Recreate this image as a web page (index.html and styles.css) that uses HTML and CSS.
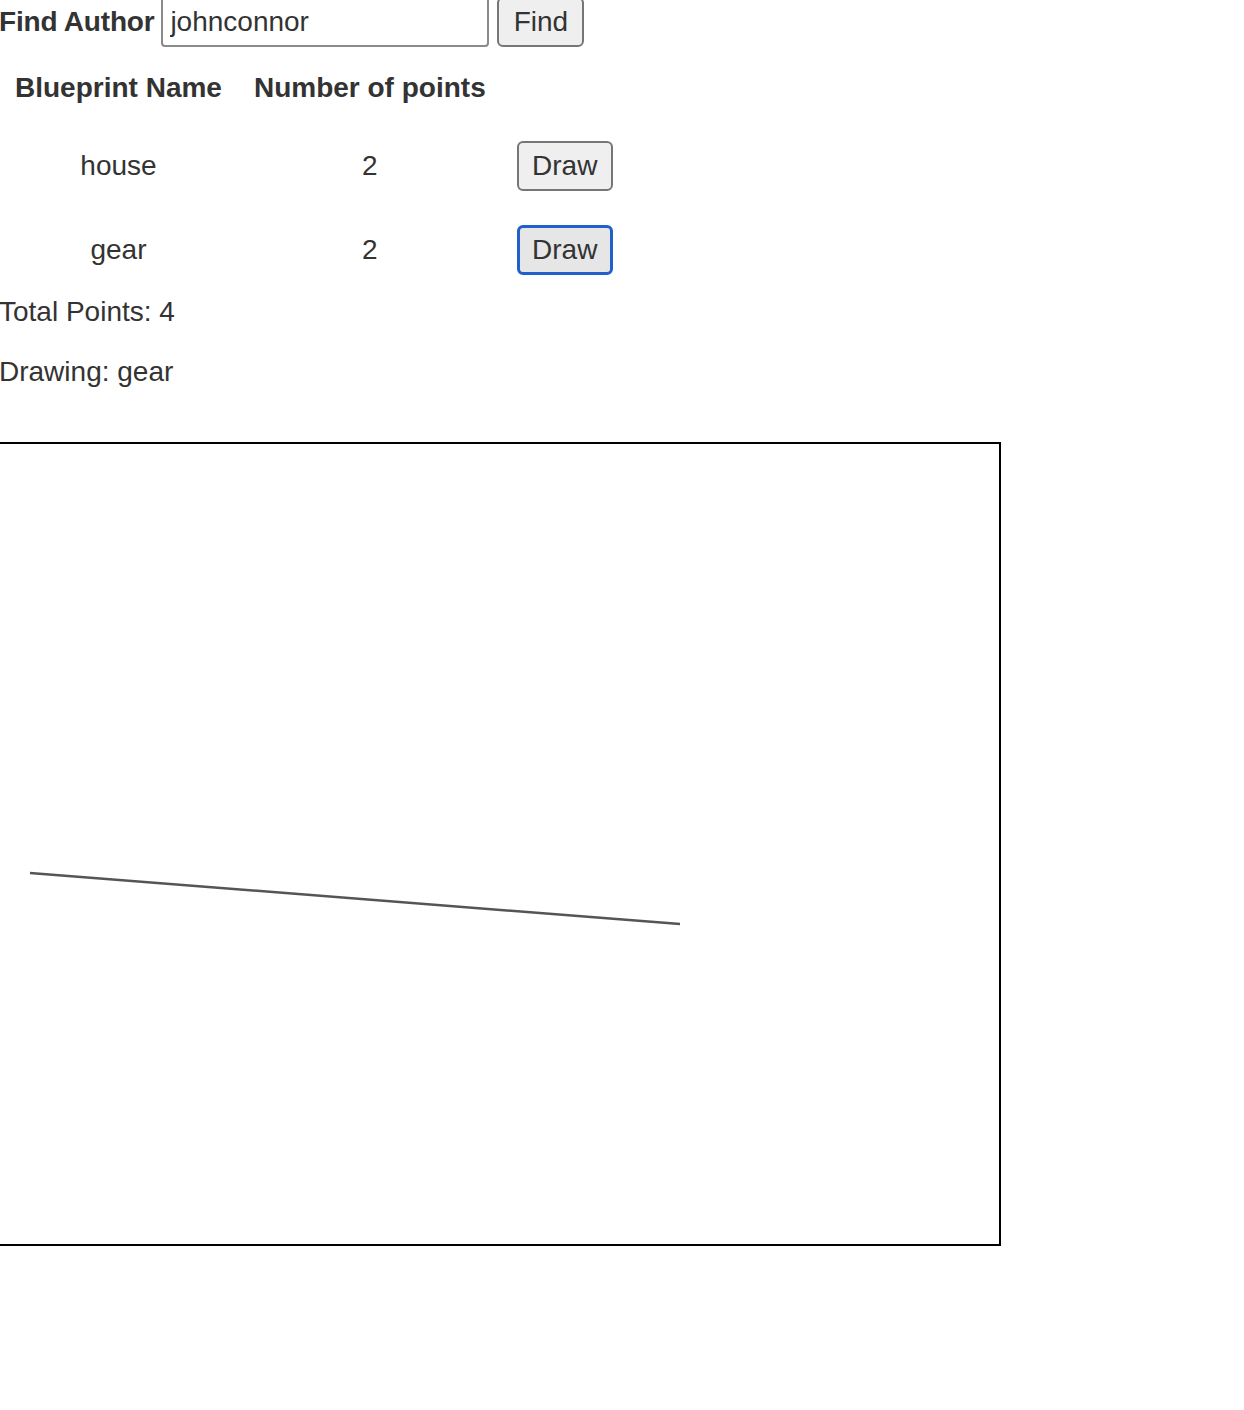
FILE: index.html
```html
<!DOCTYPE html>
<html>
<head>
<meta charset="utf-8">
<title>Blueprints</title>
<link rel="stylesheet" href="styles.css">
</head>
<body>
<div class="page">
  <div class="search">
    <label class="search-label" for="author">Find Author</label>
    <input class="search-input" id="author" type="text" value="johnconnor">
    <button class="btn btn-find" type="button">Find</button>
  </div>
  <table class="bp-table">
    <thead>
      <tr><th>Blueprint Name</th><th>Number of points</th><th></th></tr>
    </thead>
    <tbody>
      <tr><td>house</td><td>2</td><td><button class="btn btn-draw" type="button">Draw</button></td></tr>
      <tr><td>gear</td><td>2</td><td><button class="btn btn-draw btn-focus" type="button">Draw</button></td></tr>
    </tbody>
  </table>
  <p class="info">Total Points: 4</p>
  <p class="info info-last">Drawing: gear</p>
  <div class="canvas">
    <svg class="canvas-svg" width="1000" height="800" viewBox="0 0 1000 800">
      <line x1="31" y1="429" x2="681" y2="480" stroke="#555" stroke-width="2.5"/>
    </svg>
  </div>
</div>
</body>
</html>
```
FILE: styles.css
```css
html, body {
  margin: 0;
  padding: 0;
  background: #fff;
}
body {
  font-family: "Liberation Sans", Arial, Helvetica, sans-serif;
  font-size: 28px;
  line-height: 40px;
  color: #333;
}
.page {
  margin: -3px 0 0 -1px;
}
.search {
  display: flex;
  align-items: center;
  height: 50px;
}
.search-label {
  font-weight: bold;
  line-height: 40px;
  margin-right: 7px;
  letter-spacing: -0.2px;
}
.search-input {
  box-sizing: border-box;
  width: 328px;
  height: 50px;
  border: 2px solid #8a8a8a;
  border-radius: 4px;
  padding: 0 7px;
  font-family: inherit;
  font-size: 28px;
  color: #333;
  background: #fff;
  margin: 0 8px 0 0;
}
.btn {
  box-sizing: border-box;
  height: 50px;
  border: 2px solid #767676;
  border-radius: 6px;
  background: #efefef;
  font-family: inherit;
  font-size: 28px;
  color: #333;
  padding: 0;
  margin: 0;
}
.btn-find {
  width: 87px;
}
.btn-draw {
  width: 96px;
  display: block;
}
.btn-focus {
  border: 3px solid #2160cc;
  background: #e6e6e6;
}
.bp-table {
  border-collapse: collapse;
  margin-top: 5px;
}
.bp-table th {
  padding: 16px;
  text-align: center;
  font-weight: bold;
}
.bp-table td {
  padding: 17px 16px;
  text-align: center;
  vertical-align: middle;
}
.bp-table td:last-child {
  padding-left: 15px;
}
.info {
  margin: 0 0 20px 0;
}
.info-last {
  margin-bottom: 0;
}
.canvas {
  width: 1000px;
  height: 800px;
  border: 2px solid #000;
  margin: 50px 0 0 -2px;
}
.canvas-svg {
  display: block;
}
```
